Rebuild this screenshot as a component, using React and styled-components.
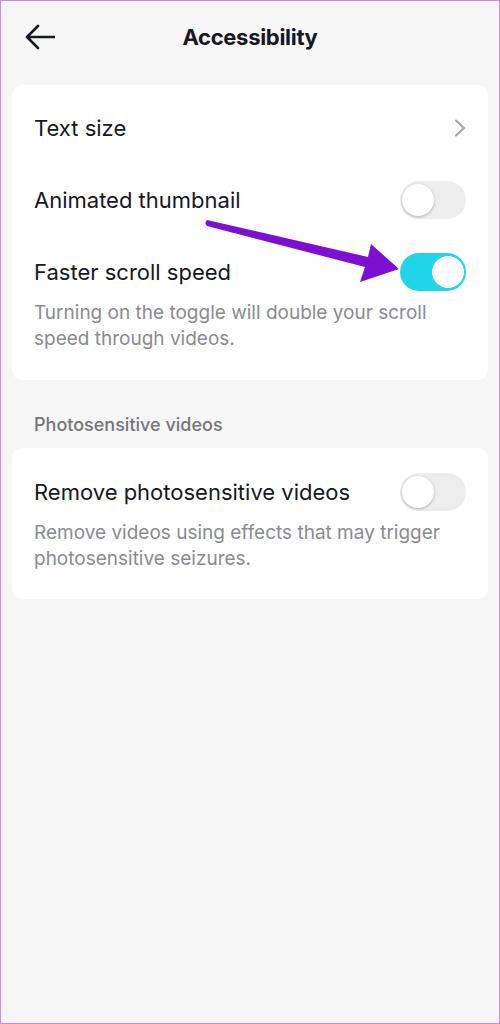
import React from 'react';
import styled, { createGlobalStyle } from 'styled-components';

// réglages d'accessibilité (mock)
const mainSettings = [
    { id: 'textSize', label: 'Text size', kind: 'link' },
    { id: 'thumb', label: 'Animated thumbnail', kind: 'toggle', on: false },
    {
        id: 'scroll',
        label: 'Faster scroll speed',
        kind: 'toggle',
        on: true,
        hint: 'Turning on the toggle will double your scroll speed through videos.'
    }
];

const photoSettings = [
    {
        id: 'photo',
        label: 'Remove photosensitive videos',
        kind: 'toggle',
        on: false,
        hint: 'Remove videos using effects that may trigger photosensitive seizures.'
    }
];

const GlobalStyle = createGlobalStyle`
    * { box-sizing: border-box; }
    body {
        margin: 0;
        background: #f6f6f6;
        font-family: Inter, Roboto, "Liberation Sans", Arial, sans-serif;
    }
`

const Screen = styled.div`
    position: relative;
    width: 500px;
    height: 1024px;
    border: 1px solid #c48fe4;
    background-color: #f6f6f6;
    overflow: hidden;
`

const Header = styled.header`
    height: 72px;
    display: grid;
    grid-template-columns: 1fr auto 1fr;
    align-items: center;
    padding: 0 24px;
`

const BackButton = styled.button`
    justify-self: start;
    width: 30px;
    height: 26px;
    padding: 0;
    border: none;
    background: none;
    display: flex;
    align-items: center;
`

const Title = styled.h1`
    margin: 0;
    font-size: 22px;
    font-weight: 700;
    color: #161823;
    letter-spacing: -0.3px;
`

const Card = styled.section`
    margin: ${p => p.$top || 0}px 11px 0;
    background: #fff;
    border-radius: 10px;
    padding: ${p => p.$padTop}px 22px ${p => p.$padBottom}px;
`

const Row = styled.div`
    padding-top: 18px;
    padding-bottom: ${p => (p.$hasHint ? 0 : 18)}px;
`

const RowHead = styled.div`
    height: 36px;
    display: flex;
    align-items: center;
    justify-content: space-between;
`

const Label = styled.span`
    font-size: 22px;
    color: #161823;
`

const Hint = styled.p`
    margin: 10px 0 0;
    font-size: 19px;
    line-height: 26px;
    color: #8a8b91;
    padding-right: 16px;
`

const SectionLabel = styled.div`
    padding: 34px 33px 12px;
    font-size: 18px;
    line-height: 22px;
    font-weight: 500;
    color: #75757a;
`

const Track = styled.div`
    position: relative;
    width: 66px;
    height: 38px;
    border-radius: 19px;
    background: ${p => (p.$on ? '#20d4ea' : '#ededed')};
    flex-shrink: 0;
`

const Knob = styled.div`
    position: absolute;
    top: 3px;
    left: ${p => (p.$on ? 32 : 2)}px;
    width: 32px;
    height: 32px;
    border-radius: 50%;
    background: #fff;
    box-shadow: ${p => (p.$on ? 'none' : '0 1px 3px rgba(0,0,0,0.25)')};
`

const Overlay = styled.svg`
    position: absolute;
    left: 0;
    top: 0;
    pointer-events: none;
`

function Toggle({ on }) {
    return (
        <Track $on={on}>
            <Knob $on={on} />
        </Track>
    );
}

function Chevron() {
    return (
        <svg width="12" height="18" viewBox="0 0 12 18">
            <polyline points="2,1.5 10,9 2,16.5" fill="none" stroke="#a3a3a6" strokeWidth="2" strokeLinecap="round" strokeLinejoin="round" />
        </svg>
    );
}

function SettingRow({ item }) {
    return (
        <Row $hasHint={!!item.hint}>
            <RowHead>
                <Label>{item.label}</Label>
                {item.kind === 'link' ? <Chevron /> : <Toggle on={item.on} />}
            </RowHead>
            {item.hint && <Hint>{item.hint}</Hint>}
        </Row>
    );
}

function App() {
    return (
        <Screen>
            <GlobalStyle />
            <Header>
                <BackButton aria-label="back">
                    <svg width="30" height="26" viewBox="0 0 30 26">
                        <path d="M2 13 H29 M13 2 L2 13 L13 24" fill="none" stroke="#161823" strokeWidth="2.6" strokeLinecap="round" strokeLinejoin="round" />
                    </svg>
                </BackButton>
                <Title>Accessibility</Title>
                <span />
            </Header>

            <Card $top={12} $padTop={7} $padBottom={28}>
                {mainSettings.map(s => <SettingRow key={s.id} item={s} />)}
            </Card>

            <SectionLabel>Photosensitive videos</SectionLabel>

            <Card $padTop={8} $padBottom={27}>
                {photoSettings.map(s => <SettingRow key={s.id} item={s} />)}
            </Card>

            {/* flèche d'annotation violette */}
            <Overlay width="500" height="1024" viewBox="0 0 500 1024">
                <path
                    d="M206 219 Q203 222 206 225 L364 266 L359 281 L398 268 L370 243 L367 256 Z"
                    fill="#7d0fd3"
                />
            </Overlay>
        </Screen>
    );
}

export default App;
